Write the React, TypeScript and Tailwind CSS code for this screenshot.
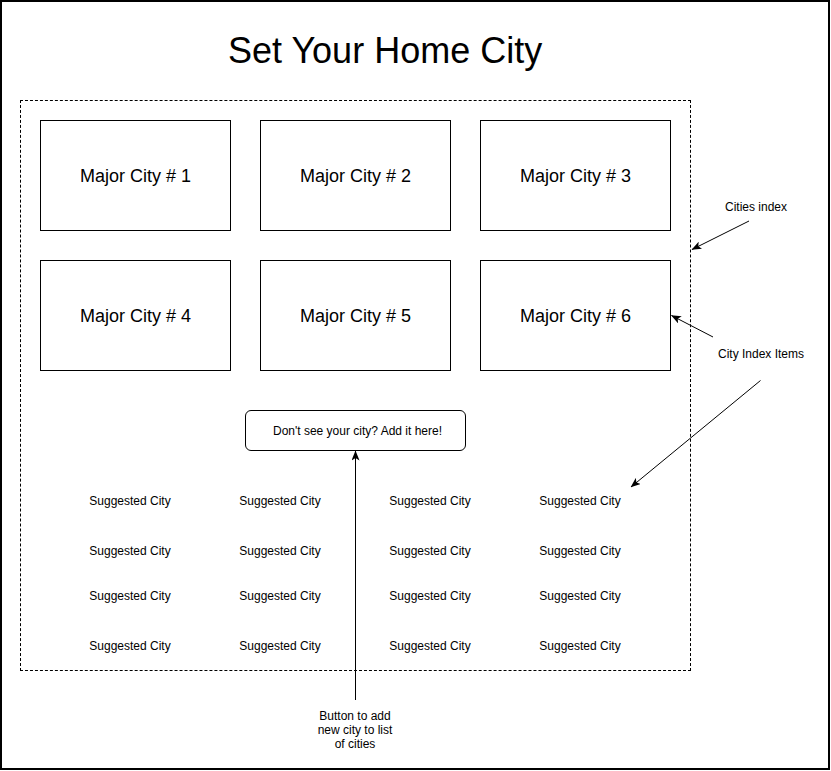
import React from 'react'

const majorCities = [1, 2, 3, 4, 5, 6]

// espaçamento de cada linha de cidades sugeridas (irregular no wireframe)
const suggestedRows = ['mt-[43px]', 'mt-[36px]', 'mt-[31px]', 'mt-[36px]']

function Annotations() {
  return (
    <svg
      className="absolute left-[-2px] top-[-2px] pointer-events-none"
      width={830}
      height={770}
      viewBox="0 0 830 770"
    >
      <defs>
        <marker
          id="arrow"
          viewBox="0 0 10 8"
          refX="9.5"
          refY="4"
          markerWidth="10"
          markerHeight="8"
          markerUnits="userSpaceOnUse"
          orient="auto"
        >
          <path d="M0,0 L10,4 L0,8 L2.5,4 Z" fill="#000" />
        </marker>
      </defs>
      <g stroke="#000" strokeWidth="1" fill="none">
        <line x1="749" y1="221" x2="692" y2="249.5" markerEnd="url(#arrow)" />
        <line x1="713" y1="337" x2="671.5" y2="315.5" markerEnd="url(#arrow)" />
        <line x1="760.5" y1="380.5" x2="631" y2="487" markerEnd="url(#arrow)" />
        <line x1="355.5" y1="700" x2="355.5" y2="451" markerEnd="url(#arrow)" />
      </g>
    </svg>
  )
}

export default function App() {
  return (
    <div className="relative w-[830px] h-[770px] border-2 border-black bg-white text-black font-['Liberation_Sans',Arial,sans-serif]">
      {/* Título */}
      <h1 className="pt-[29px] pl-[226px] text-[36px] leading-[40px] font-normal">
        Set Your Home City
      </h1>

      {/* Índice de cidades */}
      <div className="mt-[29px] ml-[18px] w-[671px] h-[571px] border border-dashed border-black">
        <div className="pt-[19px] pl-[19px] grid grid-cols-[repeat(3,191px)] gap-[29px]">
          {majorCities.map((n) => (
            <div
              key={n}
              className="w-[191px] h-[111px] pt-[2px] border border-black flex items-center justify-center text-[18px]"
            >
              Major City # {n}
            </div>
          ))}
        </div>

        <div className="mt-[39px] flex justify-center">
          <button className="w-[221px] h-[41px] pl-[4px] border border-black rounded-md bg-white text-[12px] leading-[16px]">
            Don't see your city? Add it here!
          </button>
        </div>

        <div className="pl-[34px]">
          {suggestedRows.map((mt, r) => (
            <div key={r} className={`${mt} grid grid-cols-[repeat(4,150px)] text-[12px] leading-[14px]`}>
              {[0, 1, 2, 3].map((c) => (
                <div key={c} className="text-center">
                  Suggested City
                </div>
              ))}
            </div>
          ))}
        </div>
      </div>

      {/* Anotações do wireframe */}
      <Annotations />
      <div className="absolute left-[723px] top-[198px] text-[12px] leading-[14px]">Cities index</div>
      <div className="absolute left-[716px] top-[345px] text-[12px] leading-[14px]">City Index Items</div>
      <div className="absolute left-[293px] top-[707px] w-[120px] text-center text-[12px] leading-[14px]">
        Button to add
        <br />
        new city to list
        <br />
        of cities
      </div>
    </div>
  )
}
